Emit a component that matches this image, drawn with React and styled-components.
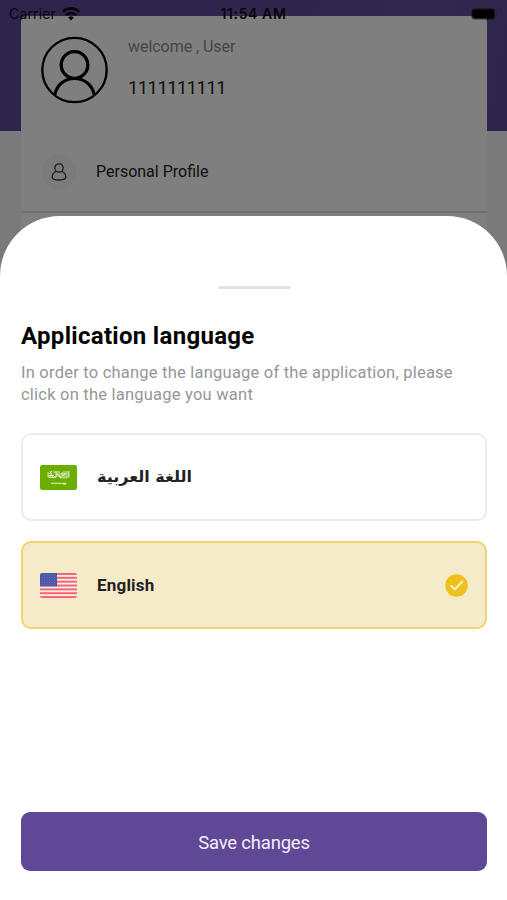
import React from "react";
import styled, { createGlobalStyle } from "styled-components";

const GlobalStyle = createGlobalStyle`
  * { box-sizing: border-box; }
  body { margin: 0; background: #fff; font-family: Roboto, "Liberation Sans", sans-serif; }
  h1, p { margin: 0; }
  button { font: inherit; border: 0; }
  svg { display: block; flex: none; }
`;

const Screen = styled.div`
  position: relative;
  width: 507px;
  height: 900px;
  overflow: hidden;
  background: #f4f4f4;
`;

const StatusBar = styled.div`
  position: absolute;
  z-index: 3;
  inset: 0 0 auto;
  height: 27px;
  padding: 0 9px;
  display: grid;
  grid-template-columns: 1fr auto 1fr;
  align-items: center;
  font-family: Inter, "Liberation Sans", sans-serif;
  font-size: 14px;
  color: #08060c;
`;

const Carrier = styled.div`
  display: flex;
  align-items: center;
  gap: 6px;
  letter-spacing: 0.15px;
`;

const Clock = styled.div`
  font-size: 14px;
  font-weight: 600;
  letter-spacing: 0.6px;
`;

const Battery = styled.svg`
  justify-self: end;
  margin-right: -1px;
`;

const Banner = styled.header`
  height: 131px;
  padding: 16px 20px 0 21px;
  background: linear-gradient(100deg, #5f4896 55%, #66509c 80%, #5f4896);
`;

const ProfileCard = styled.section`
  height: 260px;
  border-radius: 6px 6px 0 0;
  background: #fff;
`;

const UserBlock = styled.div`
  height: 115px;
  padding: 20px 0 0 20px;
  display: flex;
  align-items: flex-start;
  gap: 20px;
`;

const UserText = styled.div`
  padding-top: 1px;
  display: flex;
  flex-direction: column;
  gap: 21px;
`;

const Welcome = styled.p`
  font-size: 16px;
  line-height: 20px;
  letter-spacing: -0.05px;
  color: #8c8c8c;
`;

const Phone = styled.p`
  font-size: 18.5px;
  line-height: 20px;
  letter-spacing: -0.6px;
  color: #222;
`;

const MenuRow = styled.div`
  height: 82px;
  padding: 2px 20px 0;
  display: flex;
  align-items: center;
  gap: 20px;
  border-bottom: 2px solid #e0e0e0;
`;

const MenuIcon = styled.div`
  width: 35px;
  height: 36px;
  display: grid;
  place-items: center;
  border-radius: 50%;
  background: #f6f6f6;
`;

const MenuLabel = styled.p`
  font-size: 16px;
  line-height: 20px;
  letter-spacing: 0;
  color: #222;
`;

const Scrim = styled.div`
  position: absolute;
  z-index: 1;
  inset: 0;
  background: rgba(0, 0, 0, 0.5);
`;

const Sheet = styled.main`
  position: absolute;
  z-index: 2;
  inset: 216px 0 0;
  padding: 70px 20px 29px 21px;
  display: flex;
  flex-direction: column;
  border-radius: 60px 60px 0 0;
  background: #fff;
`;

const Handle = styled.div`
  width: 73px;
  height: 3px;
  align-self: center;
  border-radius: 2px;
  background: #e2e2e4;
`;

const Title = styled.h1`
  margin-top: 32px;
  font-size: 24px;
  line-height: 30px;
  font-weight: 700;
  letter-spacing: 0.3px;
  white-space: nowrap;
  color: #050505;
`;

const Description = styled.p`
  margin-top: 11px;
  font-size: 16.5px;
  line-height: 21.7px;
  letter-spacing: 0.22px;
  white-space: nowrap;
  color: #969696;
`;

const Options = styled.div`
  margin-top: 28px;
  display: flex;
  flex-direction: column;
  gap: 20px;
`;

const Option = styled.div`
  height: 88px;
  padding: 0 17px;
  display: flex;
  align-items: center;
  gap: 20px;
  border: 2px solid ${({ $selected }) => ($selected ? "#efd572" : "#ececed")};
  border-radius: 10px;
  background: ${({ $selected }) => ($selected ? "#f6ebc9" : "#fff")};
`;

const OptionLabel = styled.span`
  flex: 1;
  font-family: ${({ $arabic }) => ($arabic ? '"DejaVu Sans", sans-serif' : "Roboto, sans-serif")};
  font-size: ${({ $arabic }) => ($arabic ? "16px" : "17px")};
  line-height: 22px;
  font-weight: 700;
  letter-spacing: ${({ $arabic }) => ($arabic ? "0" : "0.2px")};
  color: #222;
`;

const SaveButton = styled.button`
  height: 59px;
  margin-top: auto;
  padding: 2px 0 0;
  border-radius: 9px;
  background: #5f4896;
  color: #f4eefc;
  font-size: 18.5px;
  line-height: 24px;
  letter-spacing: -0.2px;
`;

const WifiIcon = () => (
  <svg width="18" height="14" viewBox="0 0 18 14" fill="none" stroke="currentColor" strokeWidth="2.6">
    <path d="M1 4.7a11.4 11.4 0 0 1 16 0M4 8.1a7.2 7.2 0 0 1 10 0" />
    <path d="M9 13.5l-2.8-3a4 4 0 0 1 5.6 0z" fill="currentColor" stroke="none" />
  </svg>
);

const AvatarIcon = () => (
  <svg width="67" height="68" viewBox="0 0 67 68" fill="none" stroke="#000">
    <circle cx="33.5" cy="34" r="32.2" strokeWidth="2.3" />
    <circle cx="33.5" cy="29" r="13.3" strokeWidth="3.3" />
    <path d="M14 58.5C15.5 49 23.5 42.5 33.5 42.5S51.5 49 53 58.5" strokeWidth="3.2" />
  </svg>
);

const PersonIcon = () => (
  <svg width="16" height="18" viewBox="0 0 16 18" fill="none" stroke="#3a3a3a" strokeWidth="1.3">
    <circle cx="8" cy="5" r="4.2" />
    <path d="M5 8.3C2.5 9.7 1.2 12 1.2 14.2C1.2 16.4 4.5 17 8 17S14.8 16.4 14.8 14.2C14.8 12 13.5 9.7 11 8.3" />
  </svg>
);

const SaudiFlag = () => (
  <svg width="37" height="25" viewBox="0 0 37 25">
    <rect width="37" height="25" rx="2.2" fill="#6cae00" />
    <g fill="none" stroke="#e4f2cd" strokeWidth="0.9">
      <path d="M8 7v5h3V8M10 6l3 6h3V6M13 7h3M17 6v6M19 6v6h3V7M20 9h5M24 6v6M26 6v6h3V6M28 6v5M8 10.5h6M16 8.5l5 3M22 11l5-3M9 12.5h7M20 12.8h7M12 6l-3 3" />
      <path d="M11 18.3h15M23 19h3.5" strokeWidth="1" />
    </g>
  </svg>
);

const STRIPES = [0, 1, 2, 3, 4, 5, 6];
const STAR_ROWS = [2, 4.5, 7, 9.5, 12];
const STAR_COLUMNS = [2, 4.5, 7, 9.5, 12, 14.5];

const UsFlag = () => (
  <svg width="37" height="25" viewBox="0 0 37 25">
    <defs>
      <clipPath id="us-flag-shape"><rect width="37" height="25" rx="2.2" /></clipPath>
    </defs>
    <g clipPath="url(#us-flag-shape)">
      <rect width="37" height="25" fill="#fbeeea" />
      {STRIPES.map((i) => (
        <rect key={i} y={i * 3.846} width="37" height="1.95" fill="#f2646f" />
      ))}
      <rect width="17" height="13.4" fill="#4b57a8" />
      {STAR_ROWS.map((y) =>
        STAR_COLUMNS.map((x) => <circle key={`${x}-${y}`} cx={x} cy={y} r="0.45" fill="#9299cb" />)
      )}
    </g>
  </svg>
);

const CheckIcon = () => (
  <svg width="23" height="23" viewBox="0 0 23 23">
    <circle cx="11.5" cy="11.5" r="11.2" fill="#efc019" />
    <path d="M6.3 12l3.5 3.5 7.4-8" fill="none" stroke="#fcf0c6" strokeWidth="2" strokeLinecap="round" strokeLinejoin="round" />
  </svg>
);

export default function App() {
  return (
    <Screen>
      <GlobalStyle />
      <StatusBar>
        <Carrier>Carrier <WifiIcon /></Carrier>
        <Clock>11:54 AM</Clock>
        <Battery width="28" height="12" viewBox="0 0 28 12">
          <rect x="0.5" y="0.5" width="23.5" height="11" rx="3" fill="#000" opacity="0.5" />
          <rect x="1.5" y="1.5" width="21.5" height="9" rx="2" fill="#000" />
          <path d="M25.5 4v4q1.5-2 0-4" opacity="0.5" />
        </Battery>
      </StatusBar>
      <Banner>
        <ProfileCard>
          <UserBlock>
            <AvatarIcon />
            <UserText>
              <Welcome>welcome , User</Welcome>
              <Phone>1111111111</Phone>
            </UserText>
          </UserBlock>
          <MenuRow>
            <MenuIcon><PersonIcon /></MenuIcon>
            <MenuLabel>Personal Profile</MenuLabel>
          </MenuRow>
        </ProfileCard>
      </Banner>
      <Scrim />
      <Sheet>
        <Handle />
        <Title>Application language</Title>
        <Description>
          In order to change the language of the application, please
          <br />
          click on the language you want
        </Description>
        <Options>
          <Option>
            <SaudiFlag />
            <OptionLabel $arabic lang="ar">اللغة العربية</OptionLabel>
          </Option>
          <Option $selected>
            <UsFlag />
            <OptionLabel>English</OptionLabel>
            <CheckIcon />
          </Option>
        </Options>
        <SaveButton>Save changes</SaveButton>
      </Sheet>
    </Screen>
  );
}
